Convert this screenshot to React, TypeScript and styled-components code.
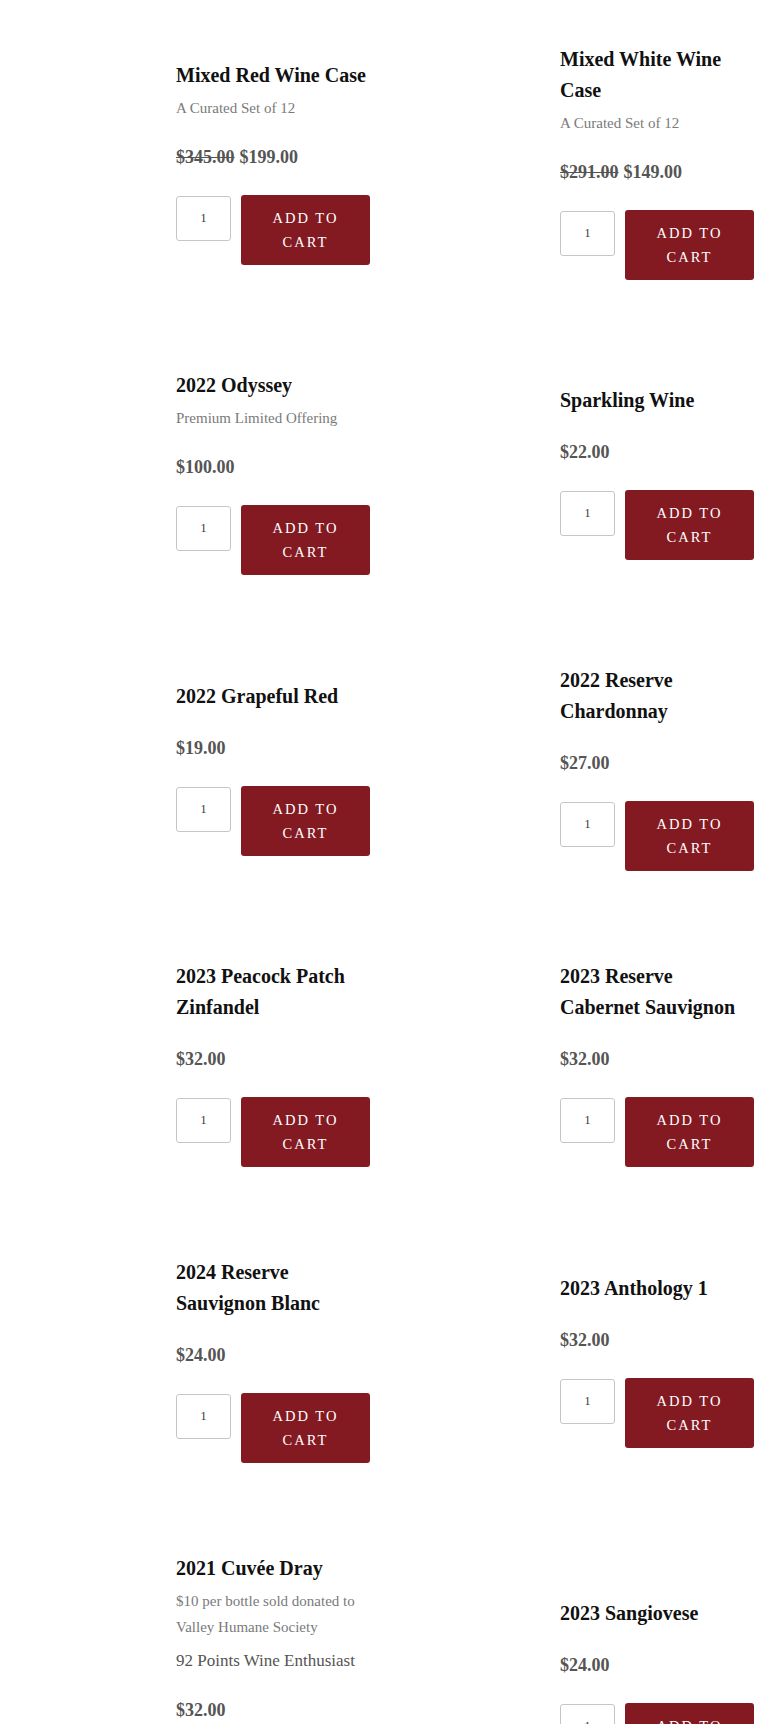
import React from "react";
import styled, { createGlobalStyle } from "styled-components";

const GlobalStyle = createGlobalStyle`
  html, body {
    margin: 0;
    padding: 0;
    background: #ffffff;
  }
  body {
    font-family: "Liberation Serif", "Times New Roman", serif;
    color: #111;
  }
  * { box-sizing: border-box; }
`;

type Product = {
  title: string;
  subtitle?: string;
  note?: string;
  oldPrice?: string;
  price: string;
};

const products: Product[] = [
  { title: "Mixed Red Wine Case", subtitle: "A Curated Set of 12", oldPrice: "$345.00", price: "$199.00" },
  { title: "Mixed White Wine Case", subtitle: "A Curated Set of 12", oldPrice: "$291.00", price: "$149.00" },
  { title: "2022 Odyssey", subtitle: "Premium Limited Offering", price: "$100.00" },
  { title: "Sparkling Wine", price: "$22.00" },
  { title: "2022 Grapeful Red", price: "$19.00" },
  { title: "2022 Reserve Chardonnay", price: "$27.00" },
  { title: "2023 Peacock Patch Zinfandel", price: "$32.00" },
  { title: "2023 Reserve Cabernet Sauvignon", price: "$32.00" },
  { title: "2024 Reserve Sauvignon Blanc", price: "$24.00" },
  { title: "2023 Anthology 1", price: "$32.00" },
  {
    title: "2021 Cuvée Dray",
    subtitle: "$10 per bottle sold donated to Valley Humane Society",
    note: "92 Points Wine Enthusiast",
    price: "$32.00",
  },
  { title: "2023 Sangiovese", price: "$24.00" },
];

const Page = styled.main`
  width: 770px;
  overflow: hidden;
`;

const Grid = styled.section`
  display: grid;
  grid-template-columns: repeat(2, 195px);
  column-gap: 189px;
  row-gap: 90px;
  align-items: center;
  padding: 44px 0 60px 176px;
`;

const Card = styled.article`
  display: flex;
  flex-direction: column;
  align-items: flex-start;
`;

const Title = styled.h2`
  margin: 0;
  font-family: "Liberation Serif", "Times New Roman", serif;
  font-weight: 700;
  font-size: 20px;
  line-height: 31px;
  color: #111;
`;

const Subtitle = styled.p`
  margin: 4px 0 0;
  font-size: 15px;
  line-height: 26px;
  color: #7a7a7a;
`;

const Note = styled.p`
  margin: 8px 0 0;
  font-size: 17px;
  line-height: 26px;
  color: #555;
`;

const Price = styled.div`
  margin-top: 23px;
  font-size: 18px;
  line-height: 26px;
  font-weight: 700;
  color: #555;
  display: flex;
  gap: 5px;
`;

const OldPrice = styled.del`
  color: #555;
  text-decoration-thickness: 1px;
`;

const CartForm = styled.form`
  margin-top: 25px;
  display: flex;
  align-items: flex-start;
  gap: 10px;
`;

const Qty = styled.input`
  width: 55px;
  height: 45px;
  margin-top: 1px;
  border: 1px solid #c6c6c6;
  border-radius: 3px;
  background: #fff;
  text-align: center;
  font-family: "Liberation Serif", serif;
  font-size: 12px;
  color: #333;
  padding: 0;
  outline: none;
`;

const AddButton = styled.button`
  width: 129px;
  height: 70px;
  border: none;
  border-radius: 3px;
  background: #831a22;
  color: #fff;
  font-family: "Liberation Serif", serif;
  font-size: 14.5px;
  line-height: 24px;
  letter-spacing: 2px;
  text-transform: uppercase;
  padding: 0 22px;
  cursor: pointer;
`;

function ProductCard({ p }: { p: Product }) {
  return (
    <Card>
      <Title>{p.title}</Title>
      {p.subtitle && <Subtitle>{p.subtitle}</Subtitle>}
      {p.note && <Note>{p.note}</Note>}
      <Price>
        {p.oldPrice && <OldPrice>{p.oldPrice}</OldPrice>}
        <span>{p.price}</span>
      </Price>
      <CartForm onSubmit={(e) => e.preventDefault()}>
        <Qty type="text" defaultValue="1" aria-label="Quantity" />
        <AddButton type="submit">Add to cart</AddButton>
      </CartForm>
    </Card>
  );
}

export default function App() {
  return (
    <Page>
      <GlobalStyle />
      <Grid>
        {products.map((p) => (
          <ProductCard key={p.title} p={p} />
        ))}
      </Grid>
    </Page>
  );
}
